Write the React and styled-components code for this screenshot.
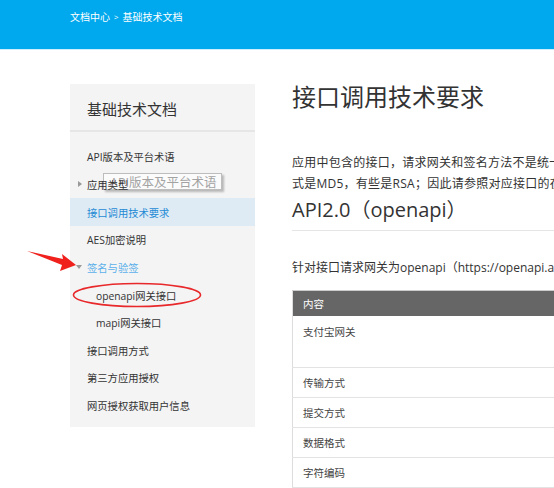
import React from "react";
import styled, { createGlobalStyle } from "styled-components";

const Global = createGlobalStyle`
  html, body { margin: 0; padding: 0; background: #fff; overflow: hidden; }
  body { font-family: "Open Sans", "Noto Sans CJK SC", sans-serif; color: #333; width: 554px; height: 488px; }
`;

const Page = styled.div`
  position: relative;
  width: 554px;
  height: 488px;
  overflow: hidden;
`;

const Header = styled.header`
  height: 50px;
  background: #00a9ed;
  border-bottom: 1px solid #cdeefc;
  padding: 9px 0 0 70px;
  box-sizing: border-box;
  font-size: 10px;
  color: #fff;
  display: flex;
  align-items: flex-start;
  gap: 4px;
  line-height: 16px;
`;

const Crumb = styled.span`
  color: #fff;
`;

const Sep = styled.span`
  font-size: 8px;
`;

const Body = styled.div`
  display: flex;
  align-items: flex-start;
  padding: 34px 0 0 70px;
  gap: 37px;
`;

const Sidebar = styled.aside`
  position: relative;
  width: 185px;
  flex-shrink: 0;
  background: #f4f4f4;
  padding-bottom: 8px;
`;

const SideTitle = styled.div`
  height: 48px;
  padding: 2px 0 0 17px;
  box-sizing: border-box;
  display: flex;
  align-items: center;
  font-size: 15px;
  color: #333;
  border-bottom: 2px solid #e6e6e6;
  font-family: "Noto Sans CJK SC", sans-serif;
`;

const List = styled.ul`
  list-style: none;
  margin: 0;
  padding: 11px 0 0;
`;

const Item = styled.li`
  position: relative;
  height: 27.65px;
  display: flex;
  align-items: center;
  padding-left: ${(p) => (p.$sub ? 26 : 17)}px;
  font-size: 10.3px;
  color: ${(p) => (p.$active ? "#1f8ad4" : p.$open ? "#5bb0ea" : "#333")};
  background: ${(p) => (p.$active ? "#deebf5" : "transparent")};
`;

const Caret = styled.span`
  position: absolute;
  left: ${(p) => (p.$down ? 6 : 8)}px;
  top: 50%;
  width: 0;
  height: 0;
  ${(p) =>
    p.$down
      ? `border-left: 3px solid transparent; border-right: 3px solid transparent; border-top: 4px solid #999; margin-top: -2px;`
      : `border-top: 3px solid transparent; border-bottom: 3px solid transparent; border-left: 4px solid #999; margin-top: -3px;`}
`;

const Label = styled.span`
  position: relative;
  z-index: 2;
`;

const Tooltip = styled.div`
  position: absolute;
  left: 33px;
  top: 2px;
  height: 17px;
  width: 119px;
  box-sizing: border-box;
  padding: 0 0 0 6px;
  display: flex;
  align-items: center;
  font-size: 12.5px;
  color: #a3a3a3;
  background: rgba(255, 255, 255, 0.6);
  border: 1px solid #bdbdbd;
  box-shadow: 2px 2px 2px rgba(0, 0, 0, 0.25);
  z-index: 1;
  white-space: nowrap;
  overflow: hidden;
`;

const Main = styled.main`
  width: 640px;
  flex-shrink: 0;
`;

const Title = styled.h1`
  margin: 0;
  font-size: 24px;
  line-height: 24px;
  font-weight: 400;
  color: #333;
  font-family: "Noto Sans CJK SC", sans-serif;
`;

const Para = styled.p`
  margin: 44px 0 0;
  font-size: 12px;
  line-height: 21px;
  letter-spacing: 0.25px;
  color: #333;
`;

const Line = styled.span`
  display: block;
  white-space: nowrap;
`;

const H2 = styled.h2`
  margin: 4px 0 0;
  padding-bottom: 8px;
  font-size: 20px;
  line-height: 24px;
  font-weight: 400;
  color: #333;
  border-bottom: 1px solid #e5e5e5;
`;

const Lead = styled.p`
  margin: 28px 0 0;
  font-size: 12px;
  line-height: 18px;
  color: #333;
  white-space: nowrap;
`;

const Table = styled.table`
  margin-top: 13px;
  border-collapse: collapse;
  width: 640px;
  font-size: 10.5px;
  border-left: 1px solid #ddd;
`;

const Th = styled.th`
  background: #666;
  color: #fff;
  font-weight: 400;
  text-align: left;
  height: 25px;
  padding: 0 10px;
  box-sizing: border-box;
  width: ${(p) => p.$w || "auto"};
  border-top: 1px solid #ccc;
  font-family: "Noto Sans CJK SC", sans-serif;
`;

const Td = styled.td`
  height: ${(p) => p.$h || 30}px;
  padding: ${(p) => (p.$top ? "8px 10px 0" : "0 10px")};
  vertical-align: ${(p) => (p.$top ? "top" : "middle")};
  color: #444;
  box-sizing: border-box;
  border-bottom: 1px solid #e3e3e3;
  font-family: "Noto Sans CJK SC", sans-serif;
`;

const Overlay = styled.svg`
  position: absolute;
  left: 0;
  top: 0;
  pointer-events: none;
  z-index: 5;
`;

const rows = [
  { k: "支付宝网关", v: "https://openapi.alipay.com/gateway.do", h: 52, top: true },
  { k: "传输方式", v: "HTTPS" },
  { k: "提交方式", v: "POST / GET" },
  { k: "数据格式", v: "JSON" },
  { k: "字符编码", v: "UTF-8" },
];

export default function App() {
  return (
    <Page>
      <Global />
      <Header>
        <Crumb>文档中心</Crumb>
        <Sep>&gt;</Sep>
        <Crumb>基础技术文档</Crumb>
      </Header>
      <Body>
        <Sidebar>
          <SideTitle>基础技术文档</SideTitle>
          <List>
            <Item><Label>API版本及平台术语</Label></Item>
            <Item>
              <Caret />
              <Label>应用类型</Label>
              <Tooltip>API版本及平台术语</Tooltip>
            </Item>
            <Item $active><Label>接口调用技术要求</Label></Item>
            <Item><Label>AES加密说明</Label></Item>
            <Item $open><Caret $down /><Label>签名与验签</Label></Item>
            <Item $sub><Label>openapi网关接口</Label></Item>
            <Item $sub><Label>mapi网关接口</Label></Item>
            <Item><Label>接口调用方式</Label></Item>
            <Item><Label>第三方应用授权</Label></Item>
            <Item><Label>网页授权获取用户信息</Label></Item>
          </List>
        </Sidebar>
        <Main>
          <Title>接口调用技术要求</Title>
          <Para>
            <Line>应用中包含的接口，请求网关和签名方法不是统一的，有些接口的签名方</Line>
            <Line>式是MD5，有些是RSA；因此请参照对应接口的在线文档进行调用。</Line>
          </Para>
          <H2>API2.0（openapi）</H2>
          <Lead>针对接口请求网关为openapi（https://openapi.alipay.com/gateway.do）的接口，调用要求如下：</Lead>
          <Table>
            <thead>
              <tr>
                <Th $w="300px">内容</Th>
                <Th>说明</Th>
              </tr>
            </thead>
            <tbody>
              {rows.map((r) => (
                <tr key={r.k}>
                  <Td $h={r.h} $top={r.top}>{r.k}</Td>
                  <Td $h={r.h} $top={r.top}>{r.v}</Td>
                </tr>
              ))}
            </tbody>
          </Table>
        </Main>
      </Body>
      <Overlay width="554" height="488" viewBox="0 0 554 488">
        <polygon points="27,251 63,259 62,254 76,265 60,271 62,265" fill="#f0201c" />
        <ellipse cx="137" cy="295" rx="63.5" ry="11.5" fill="none" stroke="#e8282a" strokeWidth="1.6" />
      </Overlay>
    </Page>
  );
}
